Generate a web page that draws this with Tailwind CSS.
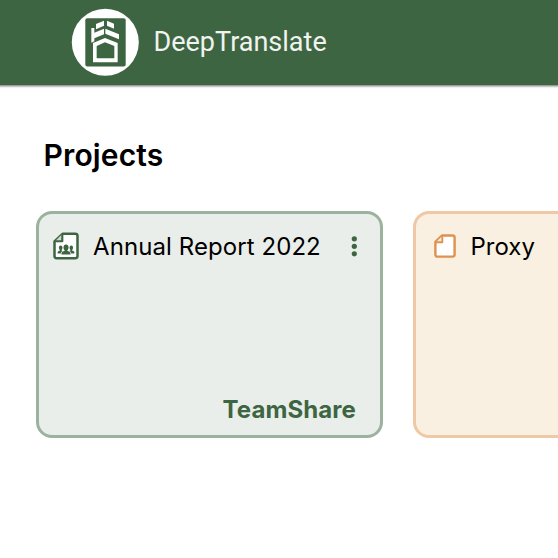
<!DOCTYPE html>
<html lang="en">
<head>
<meta charset="utf-8">
<title>DeepTranslate</title>
<script src="https://cdn.jsdelivr.net/npm/@tailwindcss/browser@4"></script>
</head>
<body class="h-screen overflow-hidden bg-white font-['Inter',sans-serif] text-black">
<header class="flex h-[85px] items-start bg-[#3e6541] pl-[71px] pt-2 shadow-[0_1px_0_#9b9b9b,0_2px_0_#c9c7ca,0_3px_1px_#eeeeee]">
  <svg class="h-[69px] w-[69px] shrink-0" viewBox="71 8 69 69">
    <circle cx="105.3" cy="42.3" r="33.5" fill="#fff"/>
    <rect x="85.3" y="18.3" width="40.4" height="48.2" rx="2" fill="#3e6541"/>
    <g transform="translate(64 0) scale(.33333)" fill="#fff">
      <path d="M96 72L120 62V77L96 88ZM129 62L150 71V86L129 77ZM82 84H91V98L120 86V103L91 115V124L82 128ZM124 86L165 103V118L124 101Z"/>
      <path fill-rule="evenodd" d="M87 129L123 114L161 129V187H87ZM98 138V175H151V138L123 127Z"/>
    </g>
  </svg>
  <span class="ml-[13.5px] mt-[17px] whitespace-nowrap font-['Roboto',sans-serif] text-[27px] leading-[34px] text-[#f0f3f0]">DeepTranslate</span>
</header>
<main class="w-full overflow-hidden pl-9 pt-[52px]">
  <h1 class="ml-[7.5px] text-[30px] font-semibold leading-9 tracking-[0.15px]">Projects</h1>
  <div class="mt-[38px] flex gap-[30px]">
    <section class="flex h-[227px] w-[347px] shrink-0 flex-col justify-between rounded-[16px] border-[3px] border-[#9bb29f] bg-[#e9eeea]">
      <div class="flex items-center pl-[14px] pt-[15px]">
        <svg class="-mt-[2px] h-7 w-[26px] shrink-0" viewBox="0 0 26 28">
          <path d="M9.5 1.8H22.3Q24.5 1.8 24.5 4V24Q24.5 26.2 22.3 26.2H3.7Q1.5 26.2 1.5 24V9.3Z" fill="#fff" stroke="#3e6541" stroke-width="2.5" stroke-linejoin="round"/>
          <path d="M9.3 2V9.3H2" fill="#cbd8cd" stroke="#3e6541" stroke-width="2.1" stroke-linejoin="round"/>
          <g fill="#3e6541"><ellipse cx="13" cy="15.4" rx="2.5" ry="3"/><path d="M8.5 22.4V21Q8.5 19.8 11.7 18.8V16.4H14.3V18.8Q17.5 19.8 17.5 21V22.4Z"/><ellipse cx="7.7" cy="15.8" rx="1.8" ry="2.2"/><ellipse cx="18.3" cy="15.8" rx="1.8" ry="2.2"/><path d="M4.6 21.5V20.2Q4.6 19.2 6.9 18.4V16.4H8.6V18.6L9.4 19Q7.8 20 7.8 21.5ZM21.4 21.5V20.2Q21.4 19.2 19.1 18.4V16.4H17.4V18.6L16.6 19Q18.2 20 18.2 21.5Z"/></g>
        </svg>
        <h2 class="ml-[14px] w-[258px] whitespace-nowrap text-[24px] font-normal leading-9 tracking-[0.08px]">Annual Report 2022</h2>
        <svg class="mb-[2px] h-[22px] w-[6px] shrink-0" viewBox="0 0 6 22" fill="#3e6541"><circle cx="3.3" cy="3.8" r="2.6"/><circle cx="3.3" cy="11.3" r="2.6"/><circle cx="3.3" cy="18.8" r="2.6"/></svg>
      </div>
      <p class="pb-[7px] pr-[24px] text-right text-[24px] font-bold leading-9 tracking-[0.1px] text-[#3e6541]">TeamShare</p>
    </section>
    <section class="h-[227px] w-[347px] shrink-0 rounded-[16px] border-[3px] border-[#efc8a5] bg-[#faf0e1]">
      <div class="flex items-center pl-[17px] pt-[15px]">
        <svg class="-mt-[2px] h-6 w-[23px] shrink-0" viewBox="0 0 23 24">
          <path d="M8.9 1.5H19.5Q21.6 1.5 21.6 3.5V20.5Q21.6 22.6 19.5 22.6H4.5Q2.4 22.6 2.4 20.5V7.8Z" fill="#fff" stroke="#df9150" stroke-width="2.4" stroke-linejoin="round"/>
          <path d="M9.3 2V8.2H3" fill="#faefe1" stroke="#df9150" stroke-width="1.9" stroke-linejoin="round"/>
        </svg>
        <h2 class="ml-[14.5px] whitespace-nowrap text-[24px] font-normal leading-9">Proxy</h2>
      </div>
    </section>
  </div>
</main>
</body>
</html>
